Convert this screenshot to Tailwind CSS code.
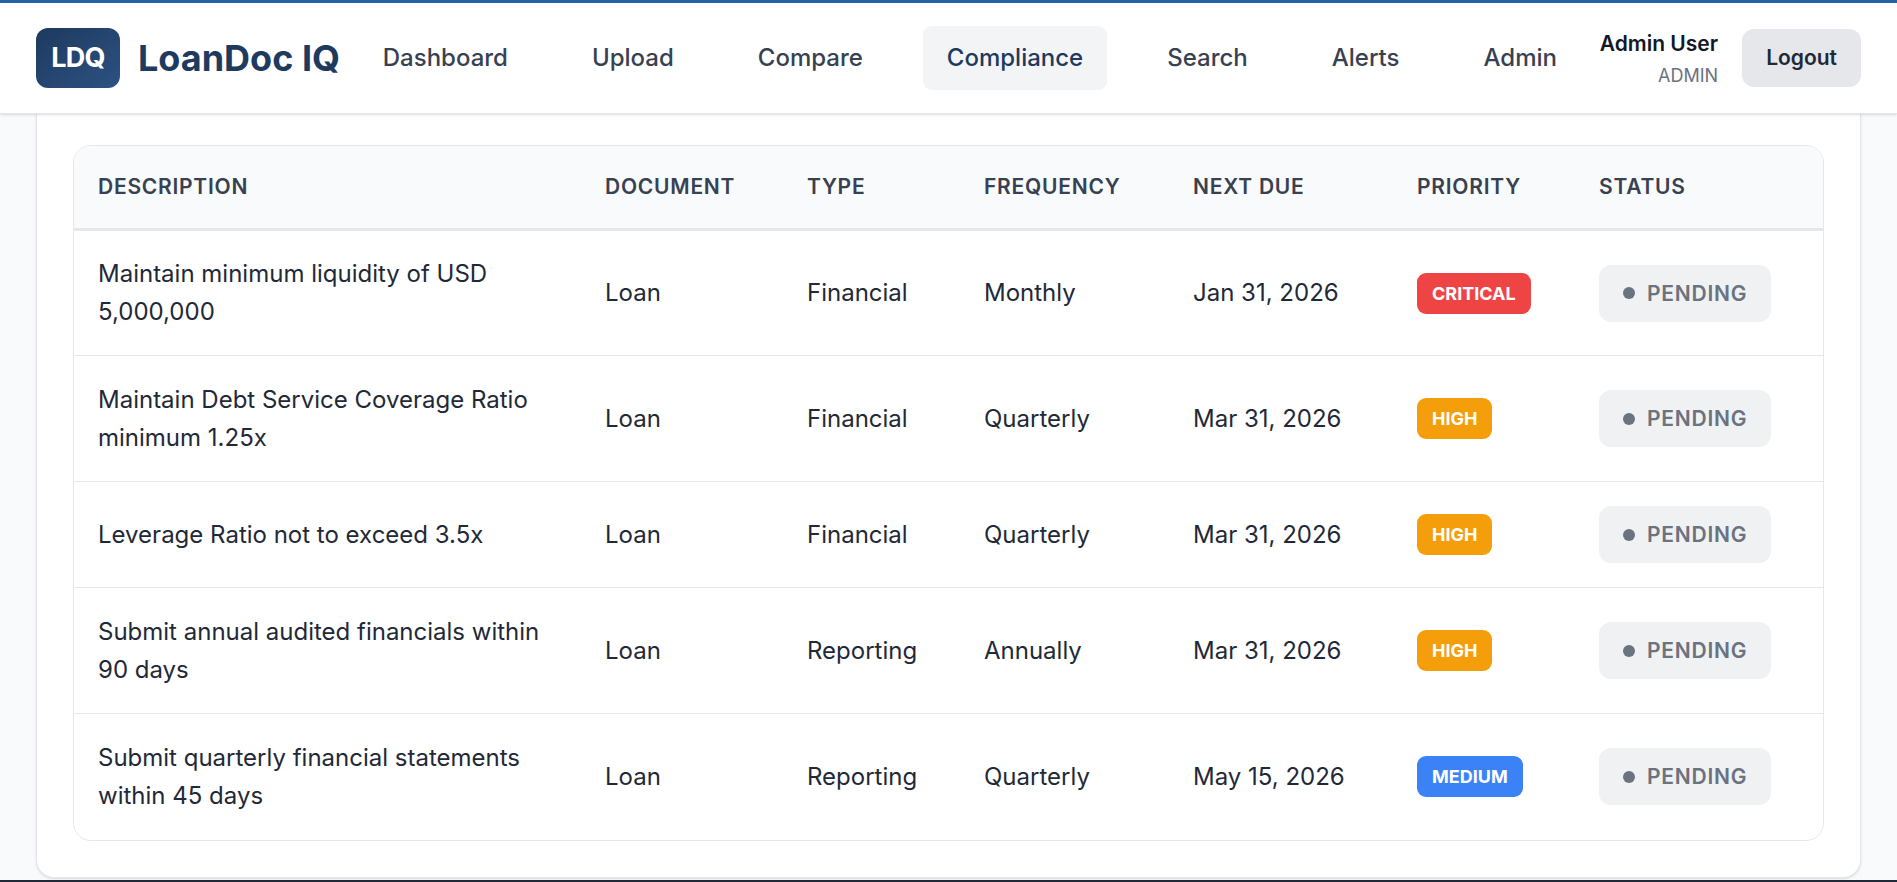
<!DOCTYPE html>
<html lang="en">

<head>
    <meta charset="UTF-8">
    <meta name="viewport" content="width=device-width, initial-scale=1.0">
    <title>LoanDoc IQ - Compliance</title>
    <script src="https://cdn.jsdelivr.net/npm/@tailwindcss/browser@4"></script>
</head>

<body class="bg-[#f9fafb] font-['Inter',sans-serif] text-2xl leading-[38px] text-[#1f2937] overflow-x-hidden">
    <!-- Top navigation -->
    <header class="relative z-10 flex items-center justify-between h-[114px] px-9 bg-white border-t-3 border-t-[#2460a8] border-b border-b-[#e5e7eb] shadow-sm">
        <a href="#" class="flex items-center gap-[18px] text-[#1e3a5f] font-bold">
            <span class="flex items-center justify-center h-15 w-21 rounded-xl bg-linear-to-br from-[#1e3a5f] to-[#2c5282] text-white text-[27px] tracking-tight">LDQ</span>
            <span class="text-4xl whitespace-nowrap">LoanDoc IQ</span>
        </a>
        <nav class="flex items-center gap-9 font-medium text-[#374151]">
            <a href="#" class="px-6 py-[13px] rounded-xl">Dashboard</a>
            <a href="#" class="px-6 py-[13px] rounded-xl">Upload</a>
            <a href="#" class="px-6 py-[13px] rounded-xl">Compare</a>
            <a href="#" class="px-6 py-[13px] rounded-[9px] bg-[#f3f4f6] text-[#1e3a5f]">Compliance</a>
            <a href="#" class="px-6 py-[13px] rounded-xl">Search</a>
            <a href="#" class="px-6 py-[13px] rounded-xl">Alerts</a>
            <a href="#" class="px-6 py-[13px] rounded-xl">Admin</a>
        </nav>
        <div class="flex items-center gap-6">
            <div class="text-right whitespace-nowrap">
                <div class="text-[21px] leading-[34px] font-semibold text-[#111827]">Admin User</div>
                <div class="text-lg leading-[29px] text-[#6b7280]">ADMIN</div>
            </div>
            <button type="button" class="h-[58px] px-6 rounded-xl bg-[#e5e7eb] text-[21px] font-semibold text-[#1f2937]">Logout</button>
        </div>
    </header>

    <!-- Obligations -->
    <main class="px-9">
        <section class="bg-white border border-t-0 border-[#e5e7eb] rounded-b-[18px] shadow-sm px-9 pt-[31px] pb-9">
            <div class="border border-[#e5e7eb] rounded-[18px] overflow-hidden">
                <table class="w-full table-fixed text-left">
                    <colgroup>
                        <col class="w-[29%]">
                        <col class="w-[202px]">
                        <col class="w-[177px]">
                        <col class="w-[209px]">
                        <col class="w-[224px]">
                        <col class="w-[182px]">
                        <col class="w-[248px]">
                    </colgroup>
                    <thead class="bg-[#f9fafb] text-[21px] leading-[34px] tracking-[0.036em] text-[#374151] uppercase">
                        <tr class="border-b-3 border-[#e5e7eb]">
                            <th class="p-6 font-semibold">Description</th>
                            <th class="p-6 font-semibold">Document</th>
                            <th class="p-6 font-semibold">Type</th>
                            <th class="p-6 font-semibold">Frequency</th>
                            <th class="p-6 font-semibold">Next Due</th>
                            <th class="p-6 font-semibold">Priority</th>
                            <th class="p-6 font-semibold">Status</th>
                        </tr>
                    </thead>
                    <tbody class="divide-y divide-[#e5e7eb]">
                        <tr class="h-[126px]">
                            <td class="px-6">Maintain minimum liquidity of USD 5,000,000</td>
                            <td class="px-6">Loan</td>
                            <td class="px-6">Financial</td>
                            <td class="px-6">Monthly</td>
                            <td class="px-6">Jan 31, 2026</td>
                            <td class="px-6"><span class="block w-fit px-[15px] py-1.5 rounded-[9px] bg-[#ef4444] text-lg leading-[29px] font-bold text-white">CRITICAL</span></td>
                            <td class="px-6"><span class="flex w-fit items-center gap-3 px-6 py-3 rounded-xl bg-[#6b7280]/10 text-[21px] leading-[33px] font-semibold tracking-[0.036em] text-[#6b7280]"><span class="size-3 rounded-full bg-[#6b7280]"></span>PENDING</span></td>
                        </tr>
                        <tr class="h-[126px]">
                            <td class="px-6">Maintain Debt Service Coverage Ratio minimum 1.25x</td>
                            <td class="px-6">Loan</td>
                            <td class="px-6">Financial</td>
                            <td class="px-6">Quarterly</td>
                            <td class="px-6">Mar 31, 2026</td>
                            <td class="px-6"><span class="block w-fit px-[15px] py-1.5 rounded-[9px] bg-[#f59e0b] text-lg leading-[29px] font-bold text-white">HIGH</span></td>
                            <td class="px-6"><span class="flex w-fit items-center gap-3 px-6 py-3 rounded-xl bg-[#6b7280]/10 text-[21px] leading-[33px] font-semibold tracking-[0.036em] text-[#6b7280]"><span class="size-3 rounded-full bg-[#6b7280]"></span>PENDING</span></td>
                        </tr>
                        <tr class="h-[106px]">
                            <td class="px-6">Leverage Ratio not to exceed 3.5x</td>
                            <td class="px-6">Loan</td>
                            <td class="px-6">Financial</td>
                            <td class="px-6">Quarterly</td>
                            <td class="px-6">Mar 31, 2026</td>
                            <td class="px-6"><span class="block w-fit px-[15px] py-1.5 rounded-[9px] bg-[#f59e0b] text-lg leading-[29px] font-bold text-white">HIGH</span></td>
                            <td class="px-6"><span class="flex w-fit items-center gap-3 px-6 py-3 rounded-xl bg-[#6b7280]/10 text-[21px] leading-[33px] font-semibold tracking-[0.036em] text-[#6b7280]"><span class="size-3 rounded-full bg-[#6b7280]"></span>PENDING</span></td>
                        </tr>
                        <tr class="h-[126px]">
                            <td class="px-6">Submit annual audited financials within 90 days</td>
                            <td class="px-6">Loan</td>
                            <td class="px-6">Reporting</td>
                            <td class="px-6">Annually</td>
                            <td class="px-6">Mar 31, 2026</td>
                            <td class="px-6"><span class="block w-fit px-[15px] py-1.5 rounded-[9px] bg-[#f59e0b] text-lg leading-[29px] font-bold text-white">HIGH</span></td>
                            <td class="px-6"><span class="flex w-fit items-center gap-3 px-6 py-3 rounded-xl bg-[#6b7280]/10 text-[21px] leading-[33px] font-semibold tracking-[0.036em] text-[#6b7280]"><span class="size-3 rounded-full bg-[#6b7280]"></span>PENDING</span></td>
                        </tr>
                        <tr class="h-[126px]">
                            <td class="px-6">Submit quarterly financial statements within 45 days</td>
                            <td class="px-6">Loan</td>
                            <td class="px-6">Reporting</td>
                            <td class="px-6">Quarterly</td>
                            <td class="px-6">May 15, 2026</td>
                            <td class="px-6"><span class="block w-fit px-[15px] py-1.5 rounded-[9px] bg-[#3b82f6] text-lg leading-[29px] font-bold text-white">MEDIUM</span></td>
                            <td class="px-6"><span class="flex w-fit items-center gap-3 px-6 py-3 rounded-xl bg-[#6b7280]/10 text-[21px] leading-[33px] font-semibold tracking-[0.036em] text-[#6b7280]"><span class="size-3 rounded-full bg-[#6b7280]"></span>PENDING</span></td>
                        </tr>
                    </tbody>
                </table>
            </div>
        </section>
    </main>

    <footer class="mt-[2px] h-[2px] bg-[#1f2937]"></footer>
</body>

</html>
